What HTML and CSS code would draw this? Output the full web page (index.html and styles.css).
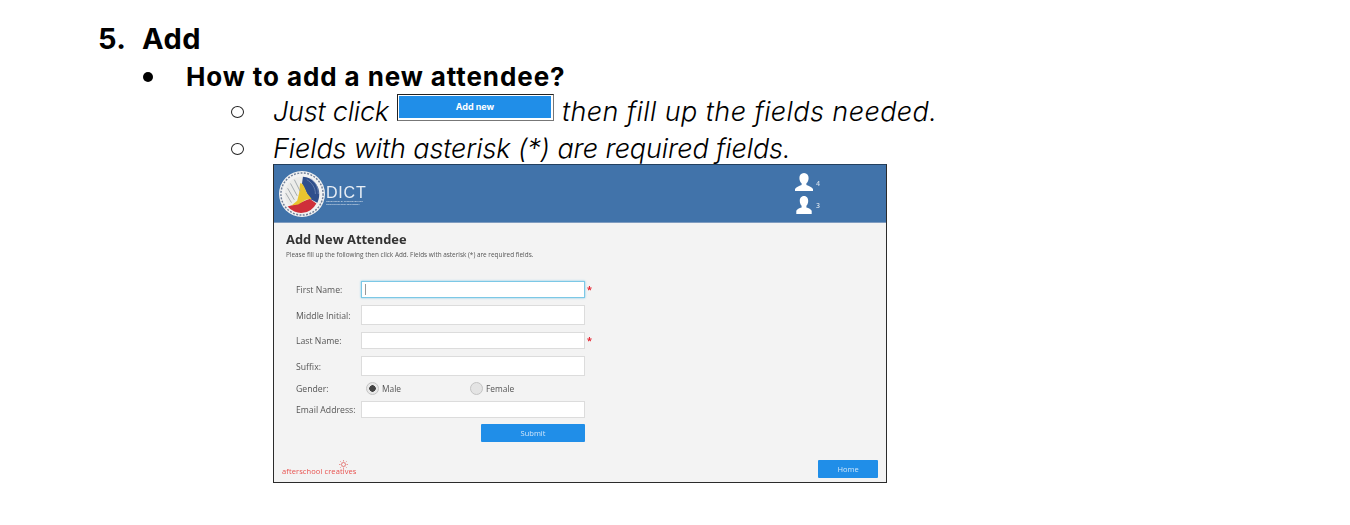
FILE: index.html
```html
<!DOCTYPE html>
<html lang="en">
<head>
    <meta charset="UTF-8">
    <title>Add</title>
    <link rel="stylesheet" href="styles.css">
</head>
<body>
    <div class="page">
        <div class="heading">
            <span class="heading-num">5.</span>
            <span>Add</span>
        </div>
        <div class="question">
            <span class="dot"></span>
            <span>How to add a new attendee?</span>
        </div>
        <div class="step">
            <span class="ring"></span>
            <span class="step-text tight">Just click</span>
            <span class="add-frame"><span class="add-btn">Add new</span></span>
            <span class="step-text wide">then fill up the fields needed.</span>
        </div>
        <div class="step">
            <span class="ring"></span>
            <span class="step-text snug">Fields with asterisk (*) are required fields.</span>
        </div>

        <div class="shot">
            <div class="shot-head">
                <div class="brand">
                    <svg class="seal" width="48" height="46" viewBox="0 0 48 48">
                        <circle cx="24" cy="24" r="24" fill="#f2f2f2"/>
                        <circle cx="24" cy="24" r="22" fill="none" stroke="#6f7f99" stroke-width="1.500" stroke-dasharray="2 1.500"/>
                        <circle cx="24" cy="24" r="18" fill="#ececea"/>
                        <path d="M25 6a18 18 0 0 1 17 18c0 4-1 7-2 9l-8-4-8-16z" fill="#2f4f8c"/>
                        <path d="M29 9c5 3 9 8 9 15M33 8c5 3 8 9 8 16" stroke="#7f94bb" stroke-width=".7" fill="none"/>
                        <path d="M9 37a18 18 0 0 0 30-3l-7-5-12 5z" fill="#cf2f3a"/>
                        <path d="M22 13c3-1 5 5 7 10l5 6-6 1-8 5-7 1 6-5 2-8z" fill="#e8c42f"/>
                        <path d="M12 13l7 13M9 18l7 12M16 9l6 12M7 23l6 10" stroke="#a3a9ad" stroke-width="1" fill="none"/>
                    </svg>
                    <div class="brand-text">
                        <div class="brand-name">DICT</div>
                        <div class="brand-sub">Department of Information and<br>Communications Technology</div>
                    </div>
                </div>
                <div class="counts">
                    <div class="count">
                        <svg width="20" height="20" viewBox="0 0 20 20"><path d="M10 0c3 0 4.600 2.200 4.600 5 0 2.400-1 4.300-2.200 5.300v1.600c2.600 1 5.600 2 6.600 4.200V18H1v-1.900c1-2.200 4-3.200 6.600-4.200v-1.600C6.400 9.300 5.400 7.400 5.400 5 5.400 2.200 7 0 10 0z" fill="#fff"/></svg>
                        <span>4</span>
                    </div>
                    <div class="count">
                        <svg width="20" height="20" viewBox="0 0 20 20"><path d="M10 1c3 0 4.200 2.400 4.200 5 0 2.200-.8 3.800-1.800 4.800v1.800c2.400.8 4.600 1.600 5.300 3.200V19H2.300v-3.200c.7-1.600 2.900-2.400 5.300-3.200v-1.800C6.600 9.800 5.800 8.200 5.800 6 5.800 3.400 7 1 10 1z" fill="#fff"/></svg>
                        <span>3</span>
                    </div>
                </div>
            </div>
            <div class="shot-body">
                <h1 class="form-title">Add New Attendee</h1>
                <p class="form-note">Please fill up the following then click Add. Fields with asterisk (*) are required fields.</p>
                <div class="form">
                    <div class="label">First Name:</div>
                    <div class="field field-focus short"><span class="caret"></span></div>
                    <div class="req">*</div>

                    <div class="label">Middle Initial:</div>
                    <div class="field tall"></div>
                    <div></div>

                    <div class="label">Last Name:</div>
                    <div class="field short"></div>
                    <div class="req">*</div>

                    <div class="label">Suffix:</div>
                    <div class="field tall"></div>
                    <div></div>

                    <div class="label">Gender:</div>
                    <div class="radios">
                        <div class="radio-item"><span class="radio radio-on"></span>Male</div>
                        <div class="radio-item"><span class="radio"></span>Female</div>
                    </div>
                    <div></div>

                    <div class="label">Email Address:</div>
                    <div class="field short"></div>
                    <div></div>

                    <div></div>
                    <div class="submit-row"><span class="blue-btn submit">Submit</span></div>
                    <div></div>
                </div>
                <div class="shot-foot">
                    <div class="maker">afterschool creatives
                        <svg class="maker-sun" width="9" height="9" viewBox="0 0 9 9"><circle cx="4.500" cy="4.500" r="2" fill="none" stroke="#e0524f" stroke-width=".7"/><path d="M4.500 0v1.500M4.500 7.500V9M0 4.500h1.500M7.500 4.500H9M1.300 1.300l1 1M6.700 6.700l1 1M7.700 1.300l-1 1M2.300 6.700l-1 1" stroke="#e0524f" stroke-width=".6"/></svg>
                    </div>
                    <span class="blue-btn home">Home</span>
                </div>
            </div>
        </div>
    </div>
</body>
</html>
```

FILE: styles.css
```css
body {
    margin: 0;
    background-color: #ffffff;
    color: #000000;
    font-family: "Inter", "Liberation Sans", sans-serif;
}

.page {
    padding: 20px 0 0 98px;
}

.heading {
    display: flex;
    align-items: center;
    height: 36px;
    font-size: 29px;
    font-weight: 700;
    letter-spacing: 0.5px;
}

.heading-num {
    width: 44px;
}

.question {
    display: flex;
    align-items: center;
    height: 35px;
    margin-top: 3px;
    margin-bottom: -1px;
    padding-left: 45px;
    font-size: 26px;
    font-weight: 700;
    letter-spacing: 0.9px;
}

.dot {
    width: 10px;
    height: 10px;
    margin-right: 33px;
    border-radius: 50%;
    background-color: #000000;
}

.step {
    display: flex;
    align-items: center;
    height: 37px;
    padding-left: 133px;
}

.ring {
    box-sizing: border-box;
    width: 13px;
    height: 12px;
    margin-right: 29px;
    border: 1.5px solid #222222;
    border-radius: 50%;
}

.step-text {
    font-size: 27px;
    font-style: italic;
    font-weight: 300;
}

.tight {
    letter-spacing: -0.2px;
}

.wide {
    letter-spacing: 0.42px;
}

.snug {
    letter-spacing: -0.1px;
}

.add-frame {
    display: flex;
    margin: 0 8px 8px 8px;
    padding: 1px 2px 2px 1px;
    border: 1px solid #777777;
    border-top-color: #222222;
    border-left-color: #222222;
}

.add-btn {
    width: 152px;
    height: 22px;
    line-height: 22px;
    text-align: center;
    font-size: 9px;
    font-weight: 700;
    font-style: normal;
    color: #ffffff;
    background-color: #208ee8;
}

.shot {
    display: flex;
    flex-direction: column;
    width: 612px;
    height: 317px;
    margin: -3px 0 0 175px;
    border: 1px solid #2b2b2b;
    border-top-color: #23405f;
    font-family: "Open Sans", sans-serif;
}

.shot-head {
    display: flex;
    justify-content: space-between;
    height: 57px;
    background-color: #4173aa;
    border-bottom: 1px solid #7f9cc0;
}

.brand {
    display: flex;
    align-items: center;
    padding-left: 4px;
    filter: blur(0.4px);
}

.brand-text {
    margin: 4px 0 0 0;
    color: #e8eef5;
}

.brand-name {
    font-family: "Liberation Sans", sans-serif;
    font-size: 16px;
    line-height: 14px;
    letter-spacing: 0.8px;
}

.brand-sub {
    font-size: 2.5px;
    line-height: 3px;
}

.counts {
    display: flex;
    flex-direction: column;
    gap: 2px;
    padding: 8px 66px 0 0;
    filter: blur(0.3px);
}

.count {
    display: flex;
    align-items: center;
    gap: 2px;
    font-size: 7px;
    font-weight: 600;
    color: #cfdbe8;
}

.shot-body {
    display: flex;
    flex-direction: column;
    flex: 1;
    padding: 8px 8px 4px 12px;
    background-color: #f3f3f3;
    filter: blur(0.35px);
}

.form-title {
    margin: 0;
    font-size: 12.9px;
    line-height: 16px;
    font-weight: 700;
    color: #333333;
}

.form-note {
    margin: 4px 0 0;
    font-size: 6.4px;
    line-height: 8px;
    color: #555555;
}

.form {
    display: grid;
    grid-template-columns: 65px 224px 12px;
    row-gap: 7px;
    align-items: center;
    margin: 22px 0 0 10px;
}

.label {
    padding-top: 1px;
    font-size: 8.7px;
    line-height: 10px;
    color: #555555;
}

.field {
    box-sizing: border-box;
    background-color: #ffffff;
    border: 1px solid #dcdcdc;
}

.short {
    height: 17px;
}

.tall {
    height: 20px;
}

.field-focus {
    display: flex;
    align-items: center;
    padding-left: 3px;
    border-color: #7cc8e6;
    box-shadow: 0 0 2px #7cc8e6;
}

.caret {
    width: 1px;
    height: 11px;
    background-color: #999999;
}

.req {
    padding-left: 2px;
    font-size: 9px;
    line-height: 9px;
    font-weight: 700;
    color: #e62430;
}

.radios {
    display: flex;
    height: 16px;
    margin: -4px 0 -3px;
    padding-left: 5px;
}

.radio-item {
    display: flex;
    align-items: center;
    gap: 3px;
    width: 104px;
    font-size: 8.4px;
    color: #555555;
}

.radio {
    box-sizing: border-box;
    width: 13px;
    height: 13px;
    border: 1px solid #c4c4c4;
    border-radius: 50%;
    background-color: #e4e4e4;
}

.radio-on {
    background: radial-gradient(circle, #444444 0 3px, #e8e8e8 3.5px);
}

.submit-row {
    display: flex;
    justify-content: flex-end;
    margin-top: -1px;
}

.blue-btn {
    display: block;
    text-align: center;
    color: #cfe6fa;
    font-size: 7.5px;
    background-color: #208ee8;
    border-radius: 1px;
}

.submit {
    width: 104px;
    height: 18px;
    line-height: 18px;
}

.shot-foot {
    display: flex;
    justify-content: space-between;
    align-items: flex-end;
    margin-top: auto;
}

.maker {
    position: relative;
    margin: 0 0 2px -4px;
    font-size: 7.5px;
    letter-spacing: 0.1px;
    color: #e8524f;
}

.maker-sun {
    position: absolute;
    top: -6px;
    left: 57px;
}

.home {
    width: 60px;
    height: 18px;
    line-height: 18px;
}
```
